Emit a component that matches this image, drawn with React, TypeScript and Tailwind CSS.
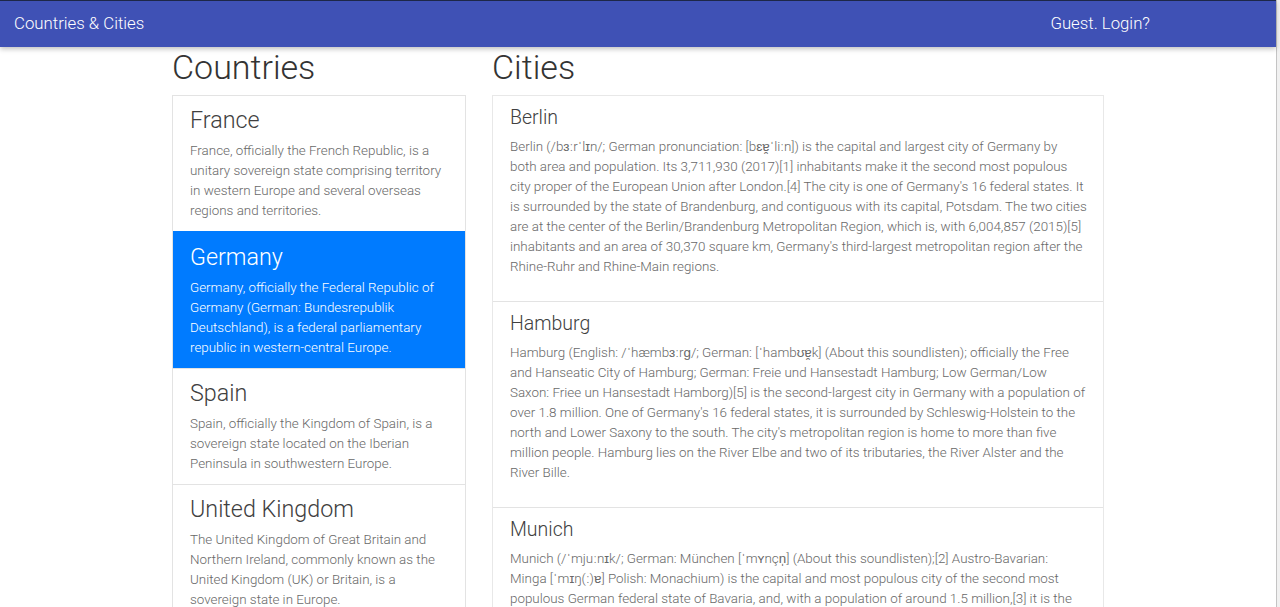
import React from 'react'

interface Country {
  name: string
  text: string
  active?: boolean
}

interface City {
  name: string
  text: string
}

const countries: Country[] = [
  {
    name: 'France',
    text: 'France, officially the French Republic, is a unitary sovereign state comprising territory in western Europe and several overseas regions and territories.',
  },
  {
    name: 'Germany',
    text: 'Germany, officially the Federal Republic of Germany (German: Bundesrepublik Deutschland), is a federal parliamentary republic in western-central Europe.',
    active: true,
  },
  {
    name: 'Spain',
    text: 'Spain, officially the Kingdom of Spain, is a sovereign state located on the Iberian Peninsula in southwestern Europe.',
  },
  {
    name: 'United Kingdom',
    text: 'The United Kingdom of Great Britain and Northern Ireland, commonly known as the United Kingdom (UK) or Britain, is a sovereign state in Europe.',
  },
]

const cities: City[] = [
  {
    name: 'Berlin',
    text: "Berlin (/bɜːrˈlɪn/; German pronunciation: [bɛɐ̯ˈliːn]) is the capital and largest city of Germany by both area and population. Its 3,711,930 (2017)[1] inhabitants make it the second most populous city proper of the European Union after London.[4] The city is one of Germany's 16 federal states. It is surrounded by the state of Brandenburg, and contiguous with its capital, Potsdam. The two cities are at the center of the Berlin/Brandenburg Metropolitan Region, which is, with 6,004,857 (2015)[5] inhabitants and an area of 30,370 square km, Germany's third-largest metropolitan region after the Rhine-Ruhr and Rhine-Main regions.",
  },
  {
    name: 'Hamburg',
    text: "Hamburg (English: /ˈhæmbɜːrɡ/; German: [ˈhambʊɐ̯k] (About this soundlisten); officially the Free and Hanseatic City of Hamburg; German: Freie und Hansestadt Hamburg; Low German/Low Saxon: Friee un Hansestadt Hamborg)[5] is the second-largest city in Germany with a population of over 1.8 million. One of Germany's 16 federal states, it is surrounded by Schleswig-Holstein to the north and Lower Saxony to the south. The city's metropolitan region is home to more than five million people. Hamburg lies on the River Elbe and two of its tributaries, the River Alster and the River Bille.",
  },
  {
    name: 'Munich',
    text: 'Munich (/ˈmjuːnɪk/; German: München [ˈmʏnçn̩] (About this soundlisten);[2] Austro-Bavarian: Minga [ˈmɪŋ(ː)ɐ] Polish: Monachium) is the capital and most populous city of the second most populous German federal state of Bavaria, and, with a population of around 1.5 million,[3] it is the third-largest city in Germany, after Berlin and Hamburg, and thus the largest which does not constitute its own state, as well as the 12th-largest city in the European Union.',
  },
]

export default function App() {
  return (
    <div className="flex h-[607px] overflow-hidden bg-white font-[Roboto,sans-serif] font-light">
      <div className="flex w-[1276px] flex-col">
        {/* navbar */}
        <header className="relative z-10 flex h-[47px] shrink-0 items-center justify-between border-t border-[#1d2748] bg-[#3f51b5] pl-[14px] pr-[126px] text-white shadow-[0_2px_5px_rgba(0,0,0,0.25)]">
          <span className="text-[16.8px]">Countries &amp; Cities</span>
          <span className="text-[16.8px]">Guest. Login?</span>
        </header>

        <main className="mx-auto flex w-[932px] gap-[26px]">
          <section className="w-[294px] shrink-0">
            <h1 className="mb-[7px] text-[34px] leading-[41px] text-[#333]">Countries</h1>
            <div className="border border-[#e3e3e3]">
              {countries.map((c, i) => (
                <div
                  key={c.name}
                  className={
                    c.active
                      ? 'border-t border-[#007bff] bg-[#007bff] px-[17px] pb-[10px] pt-[11px] text-white'
                      : `px-[17px] pb-[10px] pt-[10px] ${i > 0 ? 'border-t border-[#e3e3e3]' : ''}`
                  }
                >
                  <h4 className={`mb-[7px] text-[23.3px] leading-[28px] ${c.active ? 'text-white' : 'text-[#404040]'}`}>
                    {c.name}
                  </h4>
                  <p className={`text-[13.4px] leading-[20px] ${c.active ? 'text-white' : 'text-[#686868]'}`}>{c.text}</p>
                </div>
              ))}
            </div>
          </section>

          <section className="min-w-0 flex-1">
            <h1 className="mb-[7px] text-[34px] leading-[41px] text-[#333]">Cities</h1>
            <div className="border border-[#e8e8e8]">
              {cities.map((c, i) => (
                <div
                  key={c.name}
                  className={`pb-[24px] pl-[17px] pr-[16px] pt-[10px] ${i > 0 ? 'border-t border-[#e3e3e3]' : ''}`}
                >
                  <h5 className="mb-[7px] text-[19.5px] leading-[24px] text-[#404040]">{c.name}</h5>
                  <p className="text-[13.4px] leading-[20px] text-[#686868]">{c.text}</p>
                </div>
              ))}
            </div>
          </section>
        </main>
      </div>

      {/* scrollbar edge */}
      <div className="w-[4px] shrink-0 border-l border-[#c4c4c4] bg-[#f1f1f1]" />
    </div>
  )
}
